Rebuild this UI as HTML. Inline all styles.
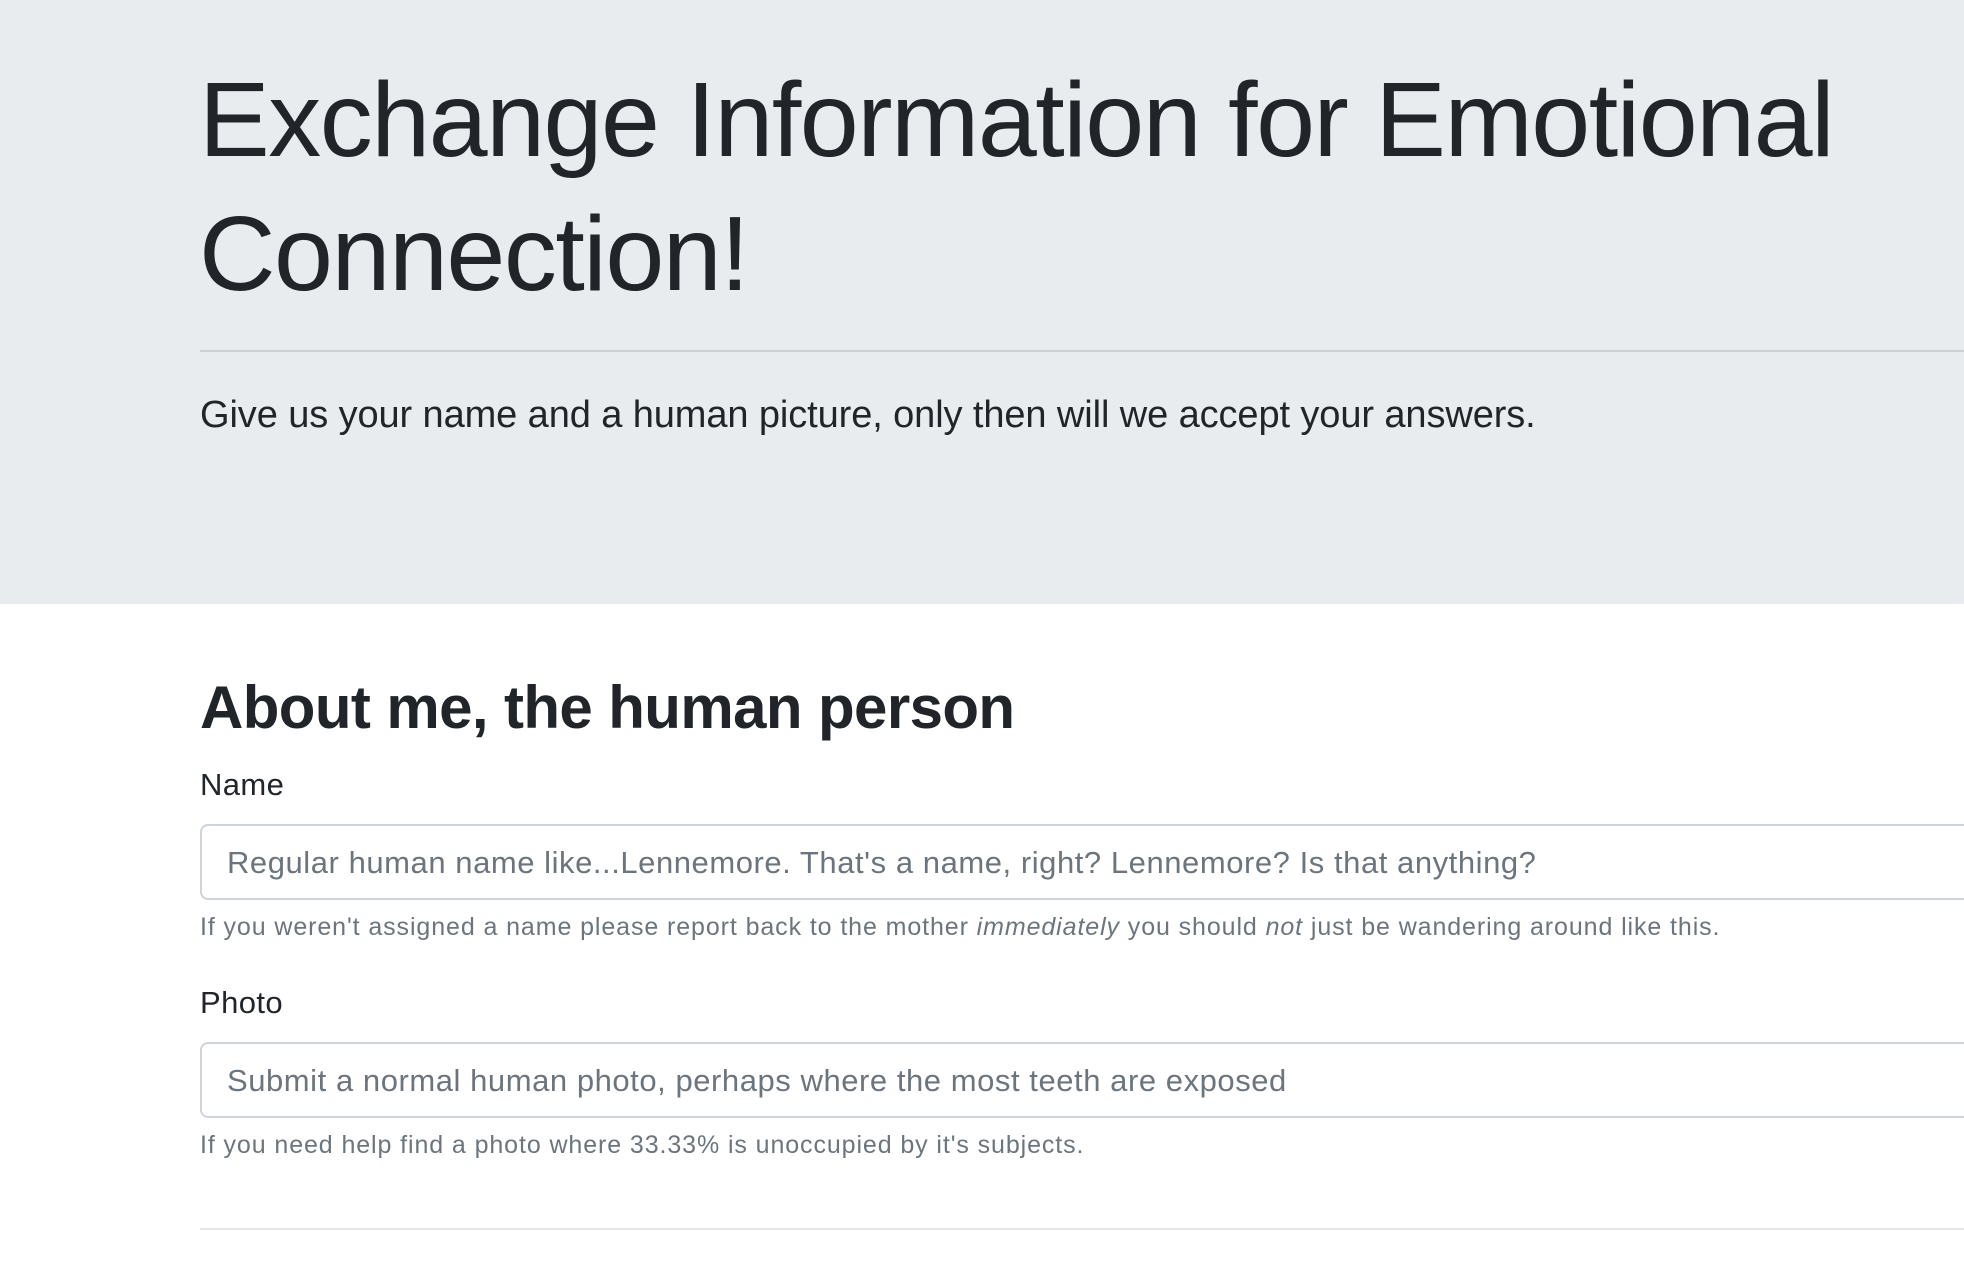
<!DOCTYPE html>
<html><head><meta charset="utf-8"><style>
html,body{margin:0;padding:0;width:1964px;height:1272px;overflow:hidden;background:#fff;font-family:"Liberation Sans",Arial,sans-serif;color:#212529}
.jumbo{position:absolute;left:0;top:0;width:1964px;height:604px;background:#e9ecef}
.abs{position:absolute;white-space:nowrap}
h1{margin:0;font-weight:300;font-size:106px;line-height:134px;letter-spacing:-1.5px}
.hr1{position:absolute;left:200px;top:350px;width:1800px;height:2px;background:#cdd1d5}
.lead{font-size:38px;font-weight:300;letter-spacing:-0.1px}
h2{margin:0;font-size:60px;font-weight:bold;letter-spacing:-0.6px}
.lbl{font-size:31px;letter-spacing:0.4px}
.inp{position:absolute;left:200px;width:1800px;height:72px;border:2px solid #ced4da;border-radius:8px;background:#fff}
.ph{font-size:31px;color:#6c757d;letter-spacing:0.55px}
.help{font-size:25px;color:#6c757d;letter-spacing:0.9px}
.hr2{position:absolute;left:200px;top:1228px;width:1800px;height:2px;background:#e5e5e5}
</style></head><body>
<div class="jumbo"></div>
<h1 class="abs" style="left:199px;top:53px">Exchange Information for Emotional</h1>
<h1 class="abs" style="left:199px;top:187px">Connection!</h1>
<div class="hr1"></div>
<div class="abs lead" style="left:200px;top:394px">Give us your name and a human picture, only then will we accept your answers.</div>
<h2 class="abs" style="left:200px;top:673px">About me, the human person</h2>
<div class="abs lbl" style="left:200px;top:767px">Name</div>
<div class="inp" style="top:824px"></div>
<div class="abs ph" style="left:227px;top:845px">Regular human name like...Lennemore. That's a name, right? Lennemore? Is that anything?</div>
<div class="abs help" style="left:200px;top:913px">If you weren't assigned a name please report back to the mother <i>immediately</i> you should <i>not</i> just be wandering around like this.</div>
<div class="abs lbl" style="left:200px;top:985px">Photo</div>
<div class="inp" style="top:1042px"></div>
<div class="abs ph" style="left:227px;top:1063px">Submit a normal human photo, perhaps where the most teeth are exposed</div>
<div class="abs help" style="left:200px;top:1131px">If you need help find a photo where 33.33% is unoccupied by it's subjects.</div>
<div class="hr2"></div>
</body></html>
